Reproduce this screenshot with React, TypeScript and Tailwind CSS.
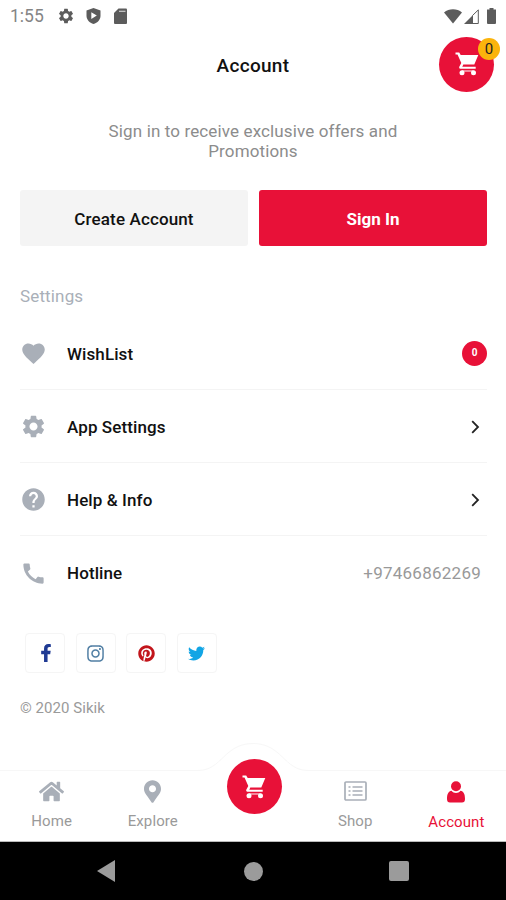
import type { ReactNode } from "react";
import { MdSettings, MdFavorite, MdHelp, MdCall } from "react-icons/md";
import { FaFacebookF, FaInstagram, FaPinterest, FaTwitter, FaHome, FaMapMarkerAlt } from "react-icons/fa";

interface SettingRow {
  label: string;
  icon: ReactNode;
  right: ReactNode;
}

interface TabItemProps {
  label: string;
  icon: ReactNode;
  active?: boolean;
}

function Chevron() {
  return (
    <svg className="mt-px mr-[7px] h-[14px] w-[9px]" viewBox="0 0 9 14" fill="none" stroke="#222" strokeWidth="1.8">
      <path d="M1.2 1.2 7 7l-5.8 5.8" />
    </svg>
  );
}

function CartIcon() {
  return (
    <svg className="h-[24px] w-[24px]" viewBox="0 0 24 24" fill="currentColor">
      <path d="M.5.500h3.700L5.700 3h17.600l-4 9.500H8.300l-1 2.300h13.400v2H5.200c-1-.2-1.300-1.200-.8-2.200l1.900-3.600L2.500 2.500h-2z" />
      <circle cx="7" cy="20.800" r="2.500" />
      <circle cx="18.500" cy="20.800" r="2.500" />
      <path d="M7 18.500h11.500v1H7z" />
    </svg>
  );
}

function ListIcon() {
  return (
    <svg className="h-[20px] w-[23px]" viewBox="0 0 23 20" fill="none" stroke="currentColor">
      <rect x="1" y="1" width="21" height="18" rx="1" strokeWidth="1.700" />
      <path strokeWidth="1.700" d="M4.500 6h2M4.500 10h2M4.500 14h2M8.500 6h10M8.500 10h10M8.500 14h10" />
    </svg>
  );
}

function StatusBar() {
  return (
    <div className="flex h-8 items-center justify-between pr-[9px] pl-[10px] text-[#5c5c5c]">
      <div className="flex items-center">
        <span className="w-[47px] pt-px text-[17.5px] leading-none text-[#858585]">1:55</span>
        <MdSettings className="h-[18px] w-[18px]" />
        <svg className="ml-[11px] h-[16px] w-[15px]" viewBox="0 0 15 16">
          <path fill="currentColor" d="M7.5 0 14.5 2.5v5.2c0 4-3 7-7 8.3-4-1.300-7-4.300-7-8.300V2.500z" />
          <path fill="#fff" d="M5.300 4.300v6.600l5.500-3.300z" />
        </svg>
        <svg className="ml-[13px] h-[16px] w-[13px]" viewBox="0 0 13 16">
          <path fill="currentColor" d="M4.500.500H12a1 1 0 0 1 1 1V15a1 1 0 0 1-1 1H1a1 1 0 0 1-1-1V5z" />
          <path stroke="#ccc" strokeWidth="1.200" d="M5 3.300h6.500" />
        </svg>
      </div>
      <div className="flex items-center">
        <svg className="h-[15px] w-[18px]" viewBox="0 0 18 15">
          <path fill="currentColor" d="M0 3.500C5-.9 13-.9 18 3.500L9 14.500z" />
        </svg>
        <svg className="ml-[2px] h-[15px] w-[15px]" viewBox="0 0 15 15">
          <path fill="currentColor" d="M0 15 9 6v9z" />
          <path fill="none" stroke="currentColor" strokeWidth="1" d="M8.500 6.500 14.300.9v13.600H8.500" />
        </svg>
        <svg className="mr-px ml-[8px] h-[16px] w-[9px]" viewBox="0 0 9 16">
          <path fill="currentColor" d="M2.500 0h4v1.500H9V15a1 1 0 0 1-1 1H1a1 1 0 0 1-1-1V1.500h2.500z" />
        </svg>
      </div>
    </div>
  );
}

function UserIcon() {
  return (
    <svg className="mt-[2px] h-[22px] w-[18px]" viewBox="0 0 18 22" fill="currentColor">
      <circle cx="9" cy="5.300" r="5" />
      <path d="M4.500 9.800C1.500 10.200 0 13 0 18c0 2.300 1 3.600 3 3.600h12c2 0 3-1.300 3-3.600 0-5-1.500-7.800-4.500-8.200C12.300 11.200 10.800 12 9 12s-3.300-.8-4.500-2.200z" />
    </svg>
  );
}

function TabItem({ label, icon, active }: TabItemProps) {
  return (
    <div className={`flex flex-1 flex-col items-center ${active ? "text-[#e81138]" : "text-[#a9afb8]"}`}>
      <div className="flex h-[26px] items-center">{icon}</div>
      <span
        className={
          active
            ? "mt-[9px] text-[15px] leading-[18px] tracking-[0.1px]"
            : "mt-[8px] text-[15px] leading-[18px] tracking-[0.1px] text-[#9a9a9a]"
        }
      >
        {label}
      </span>
    </div>
  );
}

const rows: SettingRow[] = [
  {
    label: "WishList",
    icon: <MdFavorite />,
    right: (
      <span className="flex h-[25px] w-[25px] items-center justify-center rounded-full bg-[#e81138] pb-px text-[10px] font-bold text-white">
        0
      </span>
    ),
  },
  { label: "App Settings", icon: <MdSettings />, right: <Chevron /> },
  { label: "Help & Info", icon: <MdHelp />, right: <Chevron /> },
  {
    label: "Hotline",
    icon: <MdCall />,
    right: <span className="mt-[2px] mr-[6px] text-[17px] tracking-[0.25px] text-[#999]">+97466862269</span>,
  },
];

const socials = [
  { name: "facebook", icon: <FaFacebookF className="ml-px text-[#1f3a93]" /> },
  { name: "instagram", icon: <FaInstagram className="h-[19px] w-[19px] text-[#517fa4]" /> },
  { name: "pinterest", icon: <FaPinterest className="h-[17px] w-[17px] text-[#c2151b]" /> },
  { name: "twitter", icon: <FaTwitter className="h-[17px] w-[17px] text-[#12a5e5]" /> },
];

export default function App() {
  return (
    <div className="flex h-[900px] w-[506px] flex-col overflow-hidden bg-white font-[Roboto,sans-serif] text-[#111]">
      <StatusBar />

      {/* Header */}
      <header className="grid h-[66px] grid-cols-[1fr_auto_1fr] items-center px-[12px]">
        <h1 className="col-start-2 pt-[2px] text-[19px] leading-[24px] font-medium tracking-[0.3px]">Account</h1>
        <button className="relative -top-px flex h-[55px] w-[55px] items-center justify-center justify-self-end rounded-full bg-[#e81138] text-white">
          <CartIcon />
          <span className="absolute -right-[6px] top-[1px] flex h-[22px] w-[22px] items-center justify-center rounded-full bg-[#fbb40c] pt-px text-[15px] text-[#222]">
            0
          </span>
        </button>
      </header>

      <main className="flex flex-1 flex-col px-[20px]">
        <p className="mx-auto mt-[23px] w-[310px] text-center text-[17px] leading-[20px] tracking-[0.13px] text-[#8c8c8c]">
          Sign in to receive exclusive offers and Promotions
        </p>
        <div className="mt-[29px] mr-[-1px] flex gap-[11px]">
          <button className="h-[56px] flex-1 rounded-[3px] bg-[#f4f4f4] pt-[3px] text-[17px] font-medium tracking-[0.13px]">
            Create Account
          </button>
          <button className="h-[56px] flex-1 rounded-[3px] bg-[#e81138] pt-[3px] text-[17px] font-bold text-white">
            Sign In
          </button>
        </div>

        <h2 className="mt-[40px] text-[17px] leading-[20px] tracking-[0.15px] text-[#a9afb8]">Settings</h2>
        <ul className="mt-[11px] mr-[-1px]">
          {rows.map((row) => (
            <li
              key={row.label}
              className="flex h-[73px] items-center border-b border-[#f4f4f4] last:border-b-0"
            >
              <span className="w-[47px] pt-px text-[27px] text-[#a9afb8]">{row.icon}</span>
              <span className="flex-1 pt-[3px] text-[17px] font-medium tracking-[0.1px]">{row.label}</span>
              {row.right}
            </li>
          ))}
        </ul>

        <div className="mt-[24px] ml-[5px] flex gap-[10.5px]">
          {socials.map((s) => (
            <a
              key={s.name}
              className="flex h-[40px] w-[40px] items-center justify-center rounded-[4px] border border-[#f5f5f5] text-[18px]"
            >
              {s.icon}
            </a>
          ))}
        </div>
        <p className="mt-[25px] text-[15px] leading-[20px] tracking-[0.05px] text-[#9a9a9a]">© 2020 Sikik</p>
      </main>

      {/* Tab bar with raised cart button */}
      <nav className="relative -mr-px flex h-[72px] shrink-0 border-b border-[#bbb] pt-[8px] pl-px">
        <svg className="absolute -top-[28px] left-0 h-[30px] w-[506px]" viewBox="0 0 506 30" fill="none" stroke="#f7f7f7">
          <path d="M0 28.500H198C222 28.500 224 1.500 253 1.500S284 28.500 308 28.500H506" />
        </svg>
        <TabItem label="Home" icon={<FaHome className="h-[25px] w-[25px]" />} />
        <TabItem label="Explore" icon={<FaMapMarkerAlt className="h-[23px] w-[17px]" />} />
        <div className="flex flex-1 justify-center">
          <button className="relative -top-[19px] flex h-[55px] w-[55px] items-center justify-center rounded-full bg-[#e81138] text-white">
            <CartIcon />
          </button>
        </div>
        <TabItem label="Shop" icon={<ListIcon />} />
        <TabItem label="Account" active icon={<UserIcon />} />
      </nav>

      {/* Android navigation */}
      <div className="flex h-[58px] shrink-0 items-center bg-black pr-[32px] pl-[32px]">
        <div className="flex flex-1 justify-center">
          <svg className="h-[22px] w-[18px]" viewBox="0 0 18 22">
            <path fill="#9b9b9b" d="M18 0v22L0 11z" />
          </svg>
        </div>
        <div className="flex flex-1 justify-center">
          <span className="ml-px h-[19px] w-[19px] rounded-full bg-[#9b9b9b]" />
        </div>
        <div className="flex flex-1 justify-center">
          <span className="mr-[2px] h-[20px] w-[20px] rounded-[2px] bg-[#9b9b9b]" />
        </div>
      </div>
    </div>
  );
}
